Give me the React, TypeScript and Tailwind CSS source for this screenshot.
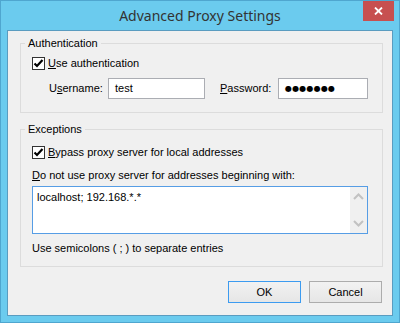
import React from "react";

const CheckBox = () => (
  <span className="flex h-[13px] w-[13px] shrink-0 items-center justify-center border border-[#333333] bg-white">
    <svg width="11" height="11" viewBox="0 0 11 11">
      <path d="M1.5 5.5 L4 8 L9.5 2" fill="none" stroke="#000" strokeWidth="2.2" />
    </svg>
  </span>
);

const ScrollBar = () => (
  <div className="flex w-[17px] flex-col justify-between bg-[#f0f0f0] py-[5px]">
    <svg width="17" height="9" viewBox="0 0 17 9">
      <path d="M4 7 L8.5 2.5 L13 7" fill="none" stroke="#c2c2c2" strokeWidth="2" />
    </svg>
    <svg width="17" height="9" viewBox="0 0 17 9">
      <path d="M4 2 L8.5 6.5 L13 2" fill="none" stroke="#c2c2c2" strokeWidth="2" />
    </svg>
  </div>
);

export default function App() {
  return (
    <div className="flex h-[323px] w-[400px] flex-col border border-[#4fa6cf] bg-[#6bcbee] font-['Liberation_Sans',sans-serif] text-[11px] text-black">
      <div className="relative flex h-[29px] shrink-0 items-center justify-center">
        <span className="pb-[1px] font-['Noto_Sans',sans-serif] text-[14px] text-[#333333]">
          Advanced Proxy Settings
        </span>
        <div className="absolute right-[5px] top-0 flex h-[20px] w-[31px] items-center justify-center bg-[#c75050]">
          <svg width="9" height="8" viewBox="0 0 9 8">
            <path d="M1 0.5 L8 7.5 M8 0.5 L1 7.5" stroke="#fff" strokeWidth="1.8" />
          </svg>
        </div>
      </div>

      <div className="mx-[6px] flex h-[286px] flex-col border border-[#5a9cc0] bg-[#f0f0f0]">
        <fieldset className="ml-[12px] mt-[5px] w-[363px] border border-[#dcdcdc] pb-[13px]">
          <legend className="ml-[4px] px-[3px] leading-[14px]">Authentication</legend>
          <div className="px-[11px]">
            <div className="mt-[7px] flex items-center gap-[3px] leading-[13px]">
              <CheckBox />
              <span>
                <u>U</u>se authentication
              </span>
            </div>
            <div className="mt-[8px] flex items-center">
              <span className="ml-[17px] w-[59px]">
                U<u>s</u>ername:
              </span>
              <div className="flex h-[21px] w-[97px] items-center border border-[#abadb3] bg-white pl-[6px]">
                test
              </div>
              <span className="ml-[15px] w-[58px]">
                <u>P</u>assword:
              </span>
              <div className="flex h-[21px] w-[90px] items-center border border-[#abadb3] bg-white pl-[6px]">
                <span className="font-['DejaVu_Sans',sans-serif] text-[8px] tracking-[0.2px]">●●●●●●●</span>
              </div>
            </div>
          </div>
        </fieldset>

        <fieldset className="ml-[12px] mt-[9px] w-[363px] border border-[#dcdcdc] pb-[11px]">
          <legend className="ml-[4px] px-[3px] leading-[14px]">Exceptions</legend>
          <div className="px-[11px]">
            <div className="mt-[10px] flex items-center gap-[3px] leading-[13px]">
              <CheckBox />
              <span>
                <u>B</u>ypass proxy server for local addresses
              </span>
            </div>
            <div className="mt-[9px] leading-[14px]">
              <u>D</u>o not use proxy server for addresses beginning with:
            </div>
            <div className="mt-[4px] flex h-[48px] w-[336px] border border-[#569de5] bg-white">
              <div className="flex-1 pl-[4px] pt-[3px] leading-[14px]">localhost; 192.168.*.*</div>
              <ScrollBar />
            </div>
            <div className="mt-[7px] leading-[14px]">Use semicolons ( ; ) to separate entries</div>
          </div>
        </fieldset>

        <div className="mt-[14px] flex justify-end gap-[8px] pr-[10px]">
          <button className="flex h-[22px] w-[73px] items-center justify-center border border-[#3c9bf0] bg-gradient-to-b from-[#f2f2f2] to-[#e6e6e6]">
            OK
          </button>
          <button className="flex h-[22px] w-[73px] items-center justify-center border border-[#acacac] bg-gradient-to-b from-[#f2f2f2] to-[#e6e6e6]">
            Cancel
          </button>
        </div>
      </div>
    </div>
  );
}
